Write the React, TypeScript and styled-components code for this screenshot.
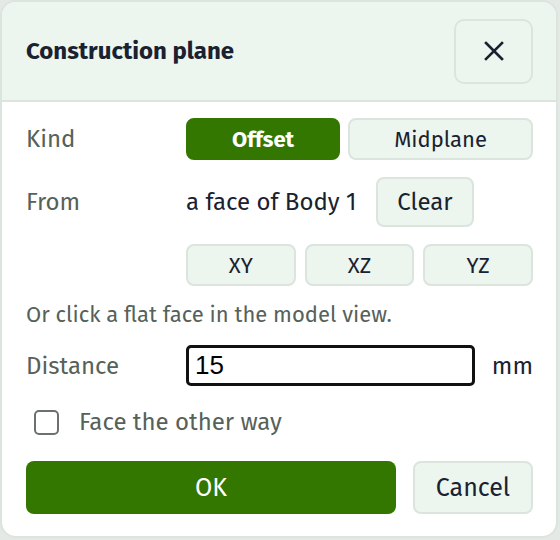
import React from "react";
import styled, { createGlobalStyle } from "styled-components";

const Global = createGlobalStyle`
  html, body { margin: 0; padding: 0; background: #e4e9e5; }
  body { font-family: "Fira Sans", "Noto Sans", sans-serif; }
  * { box-sizing: border-box; }
`;

const Card = styled.div`
  width: 558px;
  background: #ffffff;
  border: 2px solid #dbe4dd;
  border-radius: 16px;
  overflow: hidden;
  display: flex;
  flex-direction: column;
`;

const Header = styled.div`
  height: 100px;
  background: #ecf5ee;
  border-bottom: 2px solid #dbe4dd;
  display: flex;
  align-items: center;
  justify-content: space-between;
  padding: 0 23px 0 24px;
`;

const Title = styled.h1`
  margin: 0;
  font-size: 24px;
  font-weight: 700;
  color: #1a2130;
`;

const CloseButton = styled.button`
  width: 79px;
  height: 65px;
  border: 2px solid #dbe4dd;
  border-radius: 10px;
  background: #ecf5ee;
  display: flex;
  align-items: center;
  justify-content: center;
  padding: 0;
  color: #1a2130;
`;

const Body = styled.div`
  padding: 16px 23px 22px 24px;
  display: flex;
  flex-direction: column;
`;

const Row = styled.div<{ $top?: number }>`
  display: flex;
  align-items: center;
  margin-top: ${(p) => p.$top ?? 0}px;
`;

const Label = styled.div`
  width: 160px;
  flex: none;
  font-size: 24px;
  color: #56615a;
`;

const Controls = styled.div<{ $gap?: number }>`
  flex: 1;
  display: flex;
  align-items: center;
  gap: ${(p) => p.$gap ?? 8}px;
`;

const Segment = styled.button<{ $active?: boolean; $equal?: boolean }>`
  flex: ${(p) => (p.$equal ? "1 1 0" : "1 1 auto")};
  height: 42px;
  border-radius: 8px;
  font-family: inherit;
  font-size: 22px;
  font-weight: ${(p) => (p.$active ? 700 : 400)};
  border: 2px solid ${(p) => (p.$active ? "#337600" : "#dbe4dd")};
  background: ${(p) => (p.$active ? "#337600" : "#ecf5ee")};
  color: ${(p) => (p.$active ? "#ffffff" : "#1a2130")};
  padding: 0 10px;
`;

const Value = styled.span`
  font-size: 24px;
  color: #1a2130;
`;

const SmallButton = styled.button`
  height: 50px;
  padding: 0 19px;
  border-radius: 8px;
  border: 2px solid #dbe4dd;
  background: #ecf5ee;
  font-family: inherit;
  font-size: 24px;
  color: #1a2130;
  margin-left: 20px;
`;

const Hint = styled.p`
  margin: 16px 0 0;
  font-size: 22px;
  line-height: 26px;
  color: #56615a;
`;

const NumberInput = styled.input`
  width: 289px;
  height: 41px;
  border: 3px solid #111111;
  border-radius: 5px;
  padding: 0 6px;
  font-family: "Liberation Sans", Arial, sans-serif;
  font-size: 26px;
  color: #000;
  outline: none;
`;

const Unit = styled.span`
  margin-left: auto;
  font-size: 24px;
  color: #1a2130;
`;

const CheckRow = styled.label`
  display: flex;
  align-items: center;
  gap: 20px;
  margin-top: 22px;
  padding-left: 8px;
  font-size: 24px;
  line-height: 28px;
  color: #56615a;
`;

const Box = styled.span`
  width: 25px;
  height: 25px;
  border: 2px solid #6b726e;
  border-radius: 5px;
  background: #fff;
`;

const Footer = styled.div`
  display: flex;
  gap: 17px;
  margin-top: 25px;
`;

const Primary = styled.button`
  flex: 1;
  height: 53px;
  border: none;
  border-radius: 8px;
  background: #337600;
  color: #fff;
  font-family: inherit;
  font-size: 25px;
`;

const Secondary = styled.button`
  width: 120px;
  height: 53px;
  border: 2px solid #dbe4dd;
  border-radius: 8px;
  background: #ecf5ee;
  color: #1a2130;
  font-family: inherit;
  font-size: 25px;
`;

export default function App() {
  return (
    <>
      <Global />
      <Card>
        <Header>
          <Title>Construction plane</Title>
          <CloseButton aria-label="Close">
            <svg width="22" height="22" viewBox="0 0 22 22" fill="none" stroke="currentColor" strokeWidth="2.6" strokeLinecap="square">
              <path d="M3 3 L19 19 M19 3 L3 19" />
            </svg>
          </CloseButton>
        </Header>
        <Body>
          <Row>
            <Label>Kind</Label>
            <Controls>
              <Segment $active>Offset</Segment>
              <Segment>Midplane</Segment>
            </Controls>
          </Row>
          <Row $top={17}>
            <Label>From</Label>
            <Controls $gap={0}>
              <Value>a face of Body 1</Value>
              <SmallButton>Clear</SmallButton>
            </Controls>
          </Row>
          <Row $top={17}>
            <Label />
            <Controls $gap={9}>
              <Segment $equal>XY</Segment>
              <Segment $equal>XZ</Segment>
              <Segment $equal>YZ</Segment>
            </Controls>
          </Row>
          <Hint>Or click a flat face in the model view.</Hint>
          <Row $top={17}>
            <Label>Distance</Label>
            <Controls $gap={0}>
              <NumberInput defaultValue="15" />
              <Unit>mm</Unit>
            </Controls>
          </Row>
          <CheckRow>
            <Box />
            Face the other way
          </CheckRow>
          <Footer>
            <Primary>OK</Primary>
            <Secondary>Cancel</Secondary>
          </Footer>
        </Body>
      </Card>
    </>
  );
}
